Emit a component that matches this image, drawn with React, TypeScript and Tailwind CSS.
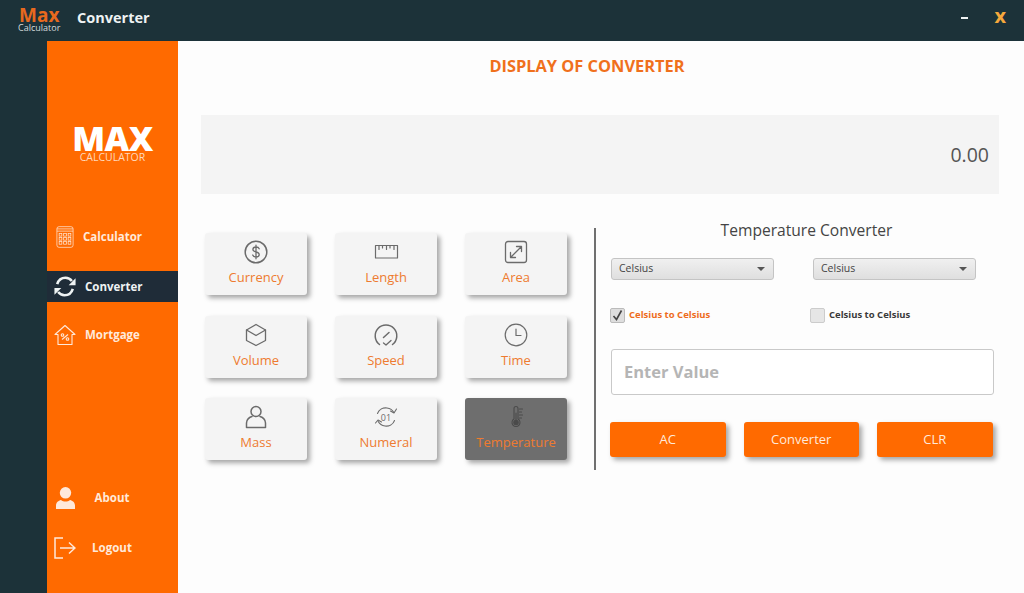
import { ReactNode } from "react";

const stroke = {
  fill: "none",
  stroke: "currentColor",
  strokeWidth: 1.5,
  strokeLinecap: "round" as const,
  strokeLinejoin: "round" as const,
};

const CurrencyIcon = () => (
  <svg width="24" height="24" viewBox="0 0 24 24" {...stroke}>
    <circle cx="12" cy="12" r="10.8" />
    <path d="M15.2 8.8c-.5-1.2-1.7-1.8-3.2-1.8-1.8 0-3.1.9-3.1 2.4 0 3.2 6.3 1.8 6.3 5.1 0 1.5-1.4 2.500-3.200 2.500-1.600 0-2.900-.7-3.300-2M12 5.200v13.600" strokeWidth="1.3" />
  </svg>
);

const LengthIcon = () => (
  <svg width="25" height="24" viewBox="0 0 25 24" {...stroke} strokeWidth="1.2">
    <path d="M1.500 5.500h22v12.500h-22z" />
    <path d="M5 5.500v4M8.500 5.500v2.500M12.500 5.500v4M16 5.500v2.500M20 5.500v4" />
  </svg>
);

const AreaIcon = () => (
  <svg width="24" height="24" viewBox="0 0 24 24" {...stroke} strokeWidth="1.3">
    <rect x="1.500" y="1.500" width="21" height="21" rx="2.500" />
    <path d="M7 17 17.500 6.500M12.500 6.500h5v5M6.500 12.500v5h5" />
  </svg>
);

const VolumeIcon = () => (
  <svg width="24" height="24" viewBox="0 0 24 24" {...stroke} strokeWidth="1.3">
    <path d="M12 1.500 21.500 7v10.500L12 22.500l-9.500-5V7z" />
    <path d="M2.500 7 12 12.500 21.500 7" />
  </svg>
);

const SpeedIcon = () => (
  <svg width="24" height="24" viewBox="0 0 24 24" {...stroke}>
    <path d="M5.500 21.500a10.800 10.800 0 1 1 13 0" />
    <path d="M9.500 14.500 15 9.500" />
    <path d="m9.500 20 2.500 2 5-4.500" strokeWidth="1.3" />
  </svg>
);

const TimeIcon = () => (
  <svg width="24" height="24" viewBox="0 0 24 24" {...stroke} strokeWidth="1.2">
    <circle cx="12" cy="12" r="10.800" />
    <path d="M12 6v6.500h5" />
  </svg>
);

const MassIcon = () => (
  <svg width="24" height="24" viewBox="0 0 24 24" {...stroke}>
    <circle cx="12" cy="6.500" r="5" />
    <path d="M2.500 22.500v-4.500c0-3.500 3-6 5.500-6.500M21.500 22.500v-4.500c0-3.500-3-6-5.500-6.500M2.500 22.500h19" />
  </svg>
);

const NumeralIcon = () => (
  <svg width="24" height="24" viewBox="0 0 24 24" {...stroke} strokeWidth="1.1">
    <path d="M3.500 8.500C5 4.500 9 2.500 13 3c3 .4 5.500 2 6.800 4.500" />
    <path d="m22.500 4-2.500 4-3.500-2" />
    <path d="M20.500 15.500C19 19.500 15 21.500 11 21c-3-.4-5.500-2-6.800-4.500" />
    <path d="m1.500 18 2.500-3 3.500 2" />
    <text x="12" y="15.500" fontSize="9" fill="currentColor" stroke="none" textAnchor="middle" fontFamily="'Open Sans', sans-serif">01</text>
  </svg>
);

const TemperatureIcon = () => (
  <svg width="24" height="24" viewBox="0 0 24 24" {...stroke} strokeWidth="1.1">
    <path d="M10 14V3.500a2 2 0 0 1 4 0V14a4 4 0 1 1-4 0z" />
    <circle cx="12" cy="17.500" r="2.200" fill="currentColor" />
    <path d="M12 8v8M15.500 4h3M15.500 7h2M15.500 10h3M15.500 13h2" />
  </svg>
);

const CalculatorIcon = () => (
  <svg width="18" height="24" viewBox="0 0 20 25" fill="none" stroke="currentColor" strokeWidth="0.8">
    <rect x="1" y="1" width="18" height="23" rx="2.500" />
    <path d="M1 3.500h18M1 6h18" />
    <rect x="3.500" y="8.500" width="3" height="3" />
    <rect x="8.500" y="8.500" width="3" height="3" />
    <rect x="13.500" y="8.500" width="3" height="3" />
    <rect x="3.500" y="13" width="3" height="3" />
    <rect x="8.500" y="13" width="3" height="3" />
    <rect x="13.500" y="13" width="3" height="3" />
    <rect x="3.500" y="17.500" width="3" height="3" />
    <rect x="8.500" y="17.500" width="3" height="3" />
    <rect x="13.500" y="17.500" width="3" height="3" />
  </svg>
);

const RefreshIcon = () => (
  <svg width="23" height="23" viewBox="0 0 24 24" fill="none" stroke="currentColor" strokeWidth="2.800">
    <path d="M3.500 9.500C4.800 5.200 8.500 2.500 12.500 2.500c2.900 0 5.300 1.300 7 3.500" />
    <path d="M20.500 14.500c-1.300 4.300-5 7-9 7-2.900 0-5.300-1.300-7-3.500" />
    <path d="M23.500 3v7.500H16z" fill="currentColor" stroke="none" />
    <path d="M.5 21v-7.500H8z" fill="currentColor" stroke="none" />
  </svg>
);

const MortgageIcon = () => (
  <svg width="22" height="22" viewBox="0 0 22 22" fill="none" stroke="currentColor" strokeWidth="1.100" strokeLinejoin="round">
    <path d="M1 10.500 11 1.500l10 9h-3v10H4v-10z" />
    <path d="M8 15.500 14 10.500" />
    <circle cx="8.500" cy="11" r="1.300" />
    <circle cx="13.500" cy="15" r="1.300" />
  </svg>
);

const UserSolidIcon = () => (
  <svg width="19" height="22" viewBox="0 0 19 22" fill="currentColor">
    <ellipse cx="9.500" cy="5.800" rx="5.700" ry="5.800" />
    <path d="M0 22v-3.500c0-3 2.500-5 5-5.500 1.200 1 2.800 1.500 4.500 1.500s3.300-.5 4.500-1.500c2.500.5 5 2.500 5 5.500V22z" />
  </svg>
);

const LogoutIcon = () => (
  <svg width="22" height="22" viewBox="0 0 22 22" fill="none" stroke="currentColor" strokeWidth="1.500">
    <path d="M9 1H1v20h8" />
    <path d="M6 11h15M15 5.500 21 11l-6 5.500" />
  </svg>
);

const cards: { label: string; icon: ReactNode; active?: boolean }[] = [
  { label: "Currency", icon: <CurrencyIcon /> },
  { label: "Length", icon: <LengthIcon /> },
  { label: "Area", icon: <AreaIcon /> },
  { label: "Volume", icon: <VolumeIcon /> },
  { label: "Speed", icon: <SpeedIcon /> },
  { label: "Time", icon: <TimeIcon /> },
  { label: "Mass", icon: <MassIcon /> },
  { label: "Numeral", icon: <NumeralIcon /> },
  { label: "Temperature", icon: <TemperatureIcon />, active: true },
];

const ConvertCard = ({ label, icon, active }: { label: string; icon: ReactNode; active?: boolean }) => (
  <div
    className={`flex h-[62px] flex-col items-center rounded-[3px] pt-[7px] shadow-[3px_3px_5px_rgba(0,0,0,0.35)] ${
      active ? "bg-[#6e6e6e] text-[#4a4a4a]" : "bg-[#f4f4f4] text-[#6b6b6b]"
    }`}
  >
    {icon}
    <span className="mt-[3px] text-[13px] leading-[20px] text-[#ee7b30]">{label}</span>
  </div>
);

const SelectBox = () => (
  <div className="flex h-[22px] w-[163px] items-center justify-between rounded-[3px] border border-[#c4c4c4] bg-gradient-to-b from-[#f0f0f0] to-[#dfdfdf] pl-[7px] pr-[8px] text-[10.500px] text-[#444]">
    Celsius
    <span className="h-0 w-0 border-x-[4px] border-t-[4px] border-x-transparent border-t-[#555]" />
  </div>
);

const ActionButton = ({ label }: { label: string }) => (
  <div className="flex h-[35px] w-[115.500px] items-center justify-center rounded-[3px] bg-[#ff6a00] text-[13px] text-[#ffe9da] shadow-[3px_3px_5px_rgba(0,0,0,0.35)]">
    {label}
  </div>
);

const SideItem = ({ icon, label, active, center, gap }: { icon: ReactNode; label: string; active?: boolean; center?: boolean; gap?: string }) => (
  <div className={`flex h-[31px] items-center pl-[7px] text-[11.500px] font-bold ${active ? "bg-[#1f2c38] text-[#eef2f3]" : "text-[#ffe9da]"}`}>
    <span className="flex w-[22px] justify-center">{icon}</span>
    <span className={center ? "w-[72px] text-center" : gap}>{label}</span>
  </div>
);

export default function App() {
  return (
    <div className="flex h-[593px] w-[1024px] flex-col overflow-hidden bg-[#1c3239] font-['Open_Sans',sans-serif]">
      <header className="flex h-[41px] shrink-0 items-start text-white">
        <div className="mt-[8px] ml-[18px] flex w-[44px] flex-col items-start">
          <span className="ml-[1px] text-[19px] leading-[15px] font-bold text-[#e8691e]">Max</span>
          <span className="text-[9px] leading-[9px] whitespace-nowrap text-[#d6dcdd]">Calculator</span>
        </div>
        <span className="mt-[8px] ml-[15px] text-[14.500px] leading-[20px] font-bold text-[#eef2f3]">Converter</span>
        <span className="mt-[17px] mr-[26px] ml-auto h-[2px] w-[7px] bg-[#eef2f3]" />
        <span className="mt-[6px] mr-[18px] text-[20px] leading-[20px] font-bold text-[#f5a83c]">x</span>
      </header>

      <div className="flex min-h-0 flex-1 pl-[47px]">
        <aside className="flex w-[131px] shrink-0 flex-col bg-[#ff6a00]">
          <div className="mt-[84px] flex flex-col items-center text-white">
            <span className="text-[34px] leading-[26px] font-extrabold tracking-[-0.5px]">MAX</span>
            <span className="text-[10.500px] leading-[12px] text-[#ffd9bd]">CALCULATOR</span>
          </div>
          <nav className="mt-[58px] flex flex-col">
            <SideItem icon={<CalculatorIcon />} label="Calculator" gap="ml-[7px]" />
            <div className="mt-[19px]">
              <SideItem active icon={<RefreshIcon />} label="Converter" gap="ml-[9px]" />
            </div>
            <div className="mt-[17px]">
              <SideItem icon={<MortgageIcon />} label="Mortgage" gap="ml-[9px]" />
            </div>
          </nav>
          <div className="mt-[132px] flex flex-col gap-[19px]">
            <SideItem center icon={<UserSolidIcon />} label="About" />
            <SideItem center icon={<LogoutIcon />} label="Logout" />
          </div>
        </aside>

        <main className="flex min-w-0 flex-1 flex-col bg-[#fdfdfd] pl-[23px] pr-[25px]">
          <h1 className="mt-[14px] pr-[26px] text-center text-[16.400px] leading-[22px] font-bold text-[#f0701c]">DISPLAY OF CONVERTER</h1>
          <div className="mt-[38px] flex h-[79px] items-center justify-end bg-[#f4f4f4] pr-[10px] text-[19.500px] text-[#555]">0.00</div>

          <div className="mt-[34px] flex">
            <div className="ml-[4px] grid h-[227px] w-[362px] grid-cols-[102px_102px_102px] content-start gap-x-[28px] gap-y-[20.500px] pt-[5px]">
              {cards.map((card) => (
                <ConvertCard key={card.label} {...card} />
              ))}
            </div>
            <div className="ml-[27px] h-[242px] w-[2px] bg-[#707070]" />
            <div className="ml-[14px] flex w-[384px] flex-col">
              <h2 className="mt-[-9px] pl-[9px] text-center text-[15.600px] leading-[22px] text-[#444]">Temperature Converter</h2>
              <div className="mt-[17px] ml-[1px] flex gap-[39px]">
                <SelectBox />
                <SelectBox />
              </div>
              <div className="mt-[27px] flex h-[16px] items-center text-[9.500px] font-bold">
                <span className="flex h-[15px] w-[15px] items-center justify-center rounded-[2px] border border-[#bbb] bg-[#dedede]">
                  <svg width="13" height="13" viewBox="0 0 13 13" fill="none" stroke="#444" strokeWidth="1.600">
                    <path d="m2.500 7 3 3.500 5-9" />
                  </svg>
                </span>
                <span className="ml-[4px] w-[181px] text-[#ee6c1c]">Celsius to Celsius</span>
                <span className="h-[15px] w-[15px] rounded-[2px] border border-[#ccc] bg-[#e6e6e6]" />
                <span className="ml-[4px] text-[#3a3a3a]">Celsius to Celsius</span>
              </div>
              <div className="mt-[26px] ml-[1px] flex h-[46px] w-[383px] items-center rounded-[3px] border border-[#c9c9c9] bg-white pl-[12px] text-[16.500px] font-bold text-[#b5b5b5]">
                Enter Value
              </div>
              <div className="mt-[27px] flex gap-[18px]">
                <ActionButton label="AC" />
                <ActionButton label="Converter" />
                <ActionButton label="CLR" />
              </div>
            </div>
          </div>
        </main>
      </div>
    </div>
  );
}
